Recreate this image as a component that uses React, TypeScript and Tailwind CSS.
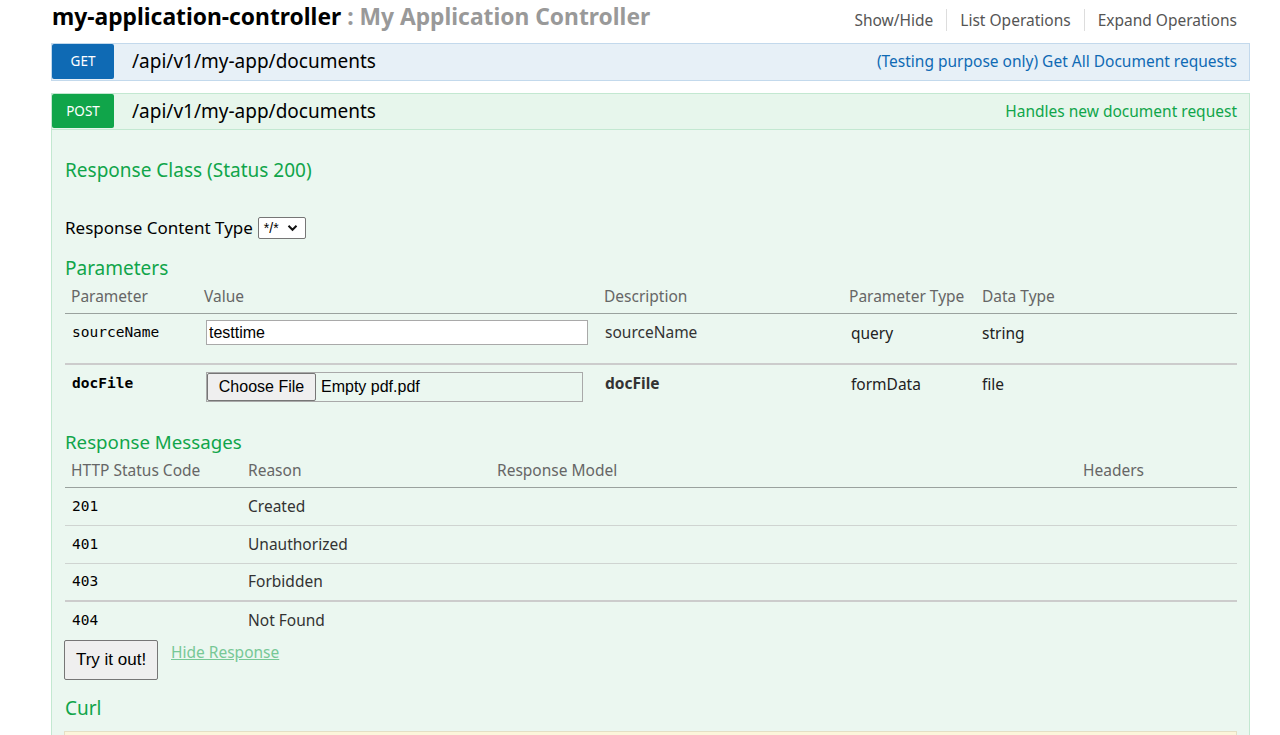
import React from 'react';

const green = 'text-[#10a54a]';

const params = [
  { name: 'sourceName', kind: 'text', value: 'testtime', desc: 'sourceName', type: 'query', data: 'string', bold: false },
  { name: 'docFile', kind: 'file', value: 'Empty pdf.pdf', desc: 'docFile', type: 'formData', data: 'file', bold: true },
];

const messages = [
  { code: '201', reason: 'Created', border: 'border-b border-[#cfd4d1]' },
  { code: '401', reason: 'Unauthorized', border: 'border-b border-[#cfd4d1]' },
  { code: '403', reason: 'Forbidden', border: 'border-b-2 border-[#cccccc]' },
  { code: '404', reason: 'Not Found', border: '' },
];

function Chevron() {
  return (
    <svg width="11" height="8" viewBox="0 0 11 8" fill="none">
      <path d="M1.5 1.8 L5.5 5.8 L9.5 1.8" stroke="#111" strokeWidth="2" />
    </svg>
  );
}

export default function App() {
  return (
    <div className="h-[735px] overflow-hidden bg-white font-['Noto_Sans',sans-serif] text-[#333]">
      <div className="ml-[51px] mr-[30px]">
        {/* heading */}
        <div className="flex items-start justify-between h-[43px] pr-[13px]">
          <h2 className="pl-px pt-[2px] text-[22.8px] font-bold leading-[30px] text-black">
            my-application-controller <span className="text-[#999]">: My Application Controller</span>
          </h2>
          <ul className="flex items-center pt-[9px] text-[15.5px] leading-[22px] text-[#555]">
            <li className="pr-[13px] border-r border-[#ddd]">Show/Hide</li>
            <li className="px-[13px] border-r border-[#ddd]">List Operations</li>
            <li className="pl-[13px]">Expand Operations</li>
          </ul>
        </div>

        {/* GET */}
        <div className="flex items-start h-[38px] border border-[#c3d9ec] bg-[#e7f0f7]">
          <span className="flex items-center justify-center w-[62px] h-[35px] rounded-[2px] bg-[#0f6ab4] text-[13.5px] text-white">GET</span>
          <span className="ml-[18px] leading-[34px] text-[19px] text-black">/api/v1/my-app/documents</span>
          <span className="ml-auto mr-[12px] leading-[34px] text-[15.5px] text-[#0f6ab4]">(Testing purpose only) Get All Document requests</span>
        </div>

        {/* POST */}
        <div className="mt-[12px] flex items-start h-[37px] border border-[#c3e8d1] bg-[#e7f6ec]">
          <span className="flex items-center justify-center w-[62px] h-[34px] rounded-[2px] bg-[#10a54a] text-[13.5px] text-white">POST</span>
          <span className="ml-[18px] leading-[34px] text-[19px] text-black">/api/v1/my-app/documents</span>
          <span className={`ml-auto mr-[12px] leading-[34px] text-[15.5px] ${green}`}>Handles new document request</span>
        </div>

        <div className="border-x border-b border-[#c3e8d1] bg-[#ebf7f0] pt-[27px] pl-[13px] pr-[12px] pb-10">
          <h4 className={`h-[26px] leading-[26px] text-[19px] ${green}`}>Response Class (Status 200)</h4>

          <div className="mt-[33px] flex items-center h-[24px] text-[17px] text-black">
            <span>Response Content Type</span>
            <span className="ml-[5px] flex items-center gap-[8px] w-[48px] h-[22px] pl-[5px] border border-[#767676] rounded-[2px] bg-white font-['Liberation_Sans',sans-serif] text-[14px]">
              */*
              <Chevron />
            </span>
          </div>

          <h4 className={`mt-[15px] h-[26px] leading-[26px] text-[19px] ${green}`}>Parameters</h4>
          <div className="grid grid-cols-[133px_400px_245px_133px_1fr] h-[33px] items-center border-b border-[#9aa29e] text-[15.5px] text-[#666]">
            <span className="pl-[6px]">Parameter</span>
            <span className="pl-[6px]">Value</span>
            <span className="pl-[6px]">Description</span>
            <span className="pl-[6px]">Parameter Type</span>
            <span className="pl-[6px]">Data Type</span>
          </div>
          {params.map((p, i) => (
            <div
              key={p.name}
              className={`grid grid-cols-[133px_400px_245px_133px_1fr] items-start text-[15.5px] ${i === 0 ? 'h-[51px] border-b-2 border-[#cccccc]' : 'h-[51px]'}`}
            >
              <span className={`pl-[7px] pt-[8px] leading-[20px] font-['DejaVu_Sans_Mono',monospace] text-[14.5px] text-black ${p.bold ? 'font-bold' : 'font-normal'}`}>{p.name}</span>
              <div className={`pl-[8px] ${i === 0 ? 'pt-[6px]' : 'pt-[7px]'}`}>
                {p.kind === 'text' ? (
                  <input
                    readOnly
                    value={p.value}
                    className="block w-[382px] h-[25px] px-[2px] border border-[#a9a9a9] bg-white font-['Liberation_Sans',sans-serif] text-[16px] text-black outline-none"
                  />
                ) : (
                  <div className="flex items-center w-[377px] h-[30px] border border-[#a9a9a9] font-['Liberation_Sans',sans-serif] text-[16px] text-black">
                    <span className="flex items-center justify-center w-[109px] h-[28px] border border-[#767676] rounded-[2px] bg-[#efefef]">Choose File</span>
                    <span className="ml-[5px]">{p.value}</span>
                  </div>
                )}
              </div>
              <span className={`pl-[7px] pt-[7px] leading-[22px] ${p.bold ? 'font-bold' : ''}`}>{p.desc}</span>
              <span className="pl-[8px] pt-[8px] leading-[22px] text-[#222]">{p.type}</span>
              <span className="pl-[6px] pt-[8px] leading-[22px] text-[#222]">{p.data}</span>
            </div>
          ))}

          <h4 className={`mt-[13px] h-[26px] leading-[26px] text-[18.7px] ${green}`}>Response Messages</h4>
          <div className="grid grid-cols-[177px_249px_586px_1fr] h-[33px] items-center border-b border-[#9aa29e] text-[15.5px] text-[#666]">
            <span className="pl-[6px]">HTTP Status Code</span>
            <span className="pl-[6px]">Reason</span>
            <span className="pl-[6px]">Response Model</span>
            <span className="pl-[6px]">Headers</span>
          </div>
          {messages.map((m) => (
            <div key={m.code} className={`grid grid-cols-[177px_249px_586px_1fr] h-[38px] items-center text-[15.5px] ${m.border}`}>
              <span className="pl-[7px] font-['DejaVu_Sans_Mono',monospace] text-[14.5px] text-black">{m.code}</span>
              <span className="pl-[6px] text-[#333]">{m.reason}</span>
              <span />
              <span />
            </div>
          ))}

          <div className="flex items-start -ml-px">
            <button className="w-[94px] h-[40px] border border-[#767676] rounded-[2px] bg-[#efefef] font-['Liberation_Sans',sans-serif] text-[17px] text-black">
              Try it out!
            </button>
            <a className="ml-[13px] mt-[1px] text-[15.5px] text-[#77c896] underline">Hide Response</a>
          </div>

          <h4 className={`mt-[15px] h-[26px] leading-[26px] text-[19px] ${green}`}>Curl</h4>
          <div className="mt-[10px] -ml-px h-[60px] border border-[#e5e0c6] bg-[#fcf6db]" />
        </div>
      </div>
    </div>
  );
}
